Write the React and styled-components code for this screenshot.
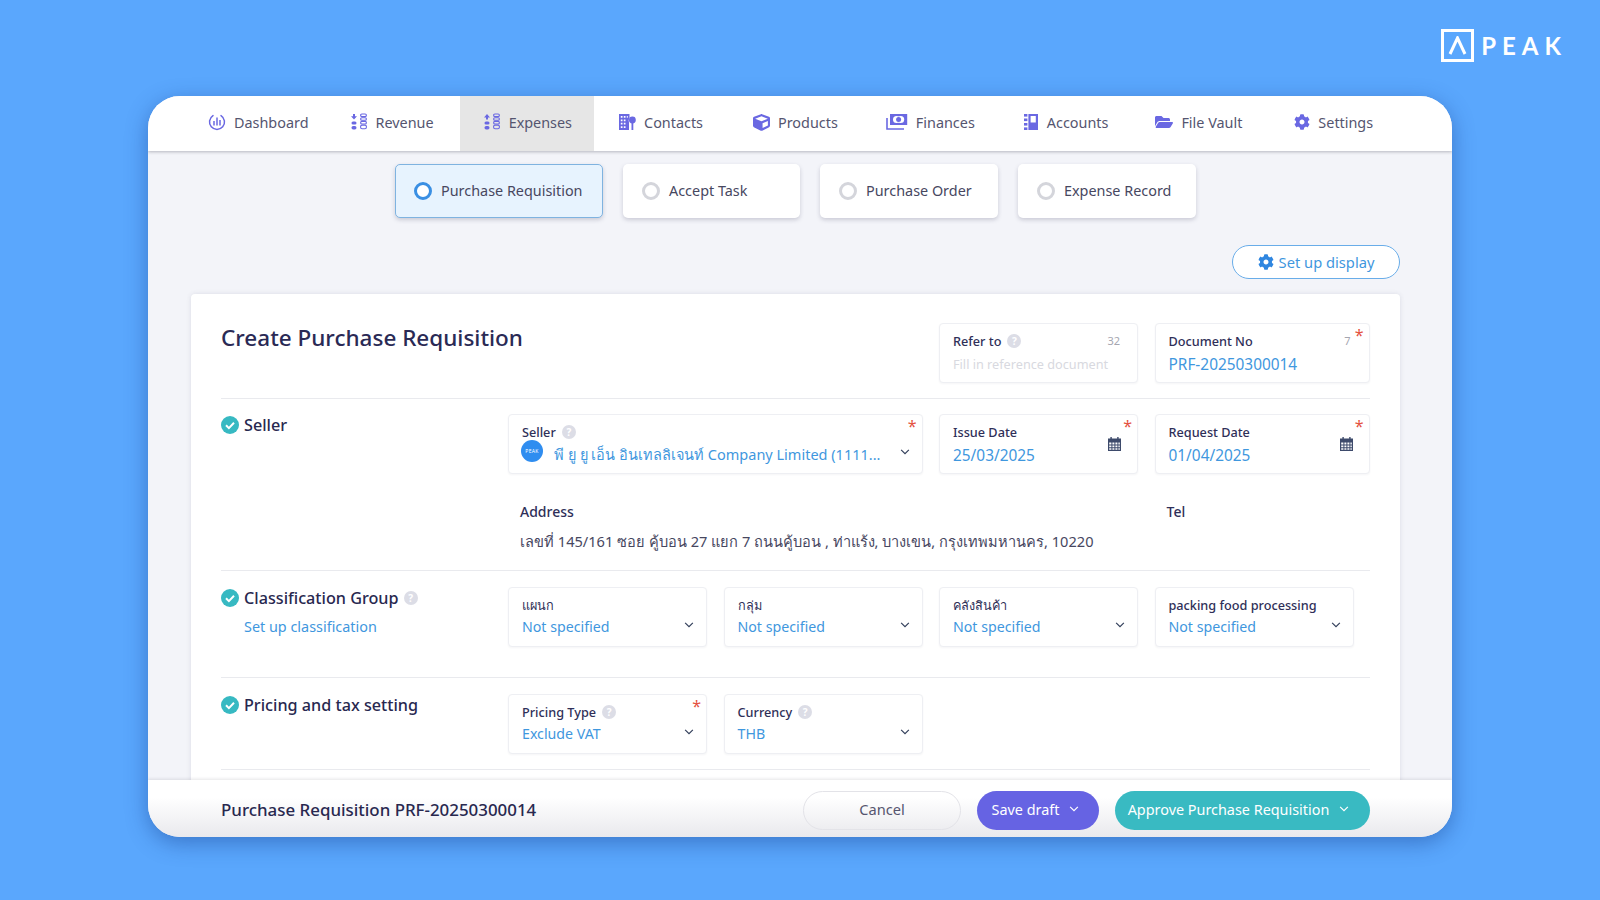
import React from 'react';
import styled, { createGlobalStyle } from 'styled-components';
import { FaCube, FaFolderOpen, FaCog } from 'react-icons/fa';

const GlobalStyle = createGlobalStyle`
  html, body {
    margin: 0;
    padding: 0;
    background: #5aa7fd;
  }
  body {
    font-family: 'Noto Sans', 'Open Sans', 'DejaVu Sans', sans-serif;
    color: #2b2b55;
  }
  * { box-sizing: border-box; }
`;

const ICON_COLOR = '#6a68e2';
const BLUE = '#3f97de';

const DashboardIcon = () => (
  <svg width="18" height="18" viewBox="0 0 18 18" fill="none" stroke={ICON_COLOR}>
    <path d="M5 2.6a7.5 7.5 0 1 0 8 0" strokeWidth="1.5" strokeLinecap="round" />
    <path d="M6 8v4.5M9 4.5v8M12 7v5.5" strokeWidth="1.5" />
  </svg>
);

const Coins = ({ up }) => (
  <svg width="18" height="18" viewBox="0 0 18 18" fill={ICON_COLOR}>
    {up ? <path d="M4 1l3 3.4H5v2.2H3V4.4H1z" /> : <path d="M3 1h2v2.2h2L4 6.6 1 3.2h2z" />}
    <rect x="1.5" y="8.5" width="5" height="3" rx="1.5" />
    <rect x="1.5" y="13" width="5" height="3.4" rx="1.7" />
    <g fill="none" stroke={ICON_COLOR} strokeWidth="1.1">
      <rect x="10.6" y="1" width="5.8" height="2.6" rx="1.3" />
      <rect x="10.6" y="4.7" width="5.8" height="2.6" rx="1.3" />
      <rect x="10.6" y="8.4" width="5.8" height="2.6" rx="1.3" />
      <rect x="10.6" y="12.1" width="5.8" height="3.6" rx="1.5" />
    </g>
  </svg>
);

const ContactsIcon = () => (
  <svg width="18" height="18" viewBox="0 0 18 18" fill={ICON_COLOR}>
    <path d="M1 1h10.5v4.2A4 4 0 0 0 11 9.8V17H1zm1.8 2v1.8h1.7V3zm3 0v1.8h1.7V3zm3 0v1.8h1V3zm-6 3.4v1.8h1.7V6.4zm3 0v1.8h1.7V6.4zm-3 3.4v1.8h1.7V9.8zm3 0v1.8h1.7V9.8zm-3 3.4V15h1.7v-1.8zm3 0V15h1.7v-1.8z" fillRule="evenodd" />
    <circle cx="14.4" cy="7" r="3.4" />
    <rect x="13.5" y="10" width="1.8" height="7" />
  </svg>
);

const FinancesIcon = () => (
  <svg width="22" height="18" viewBox="0 0 22 18" fill="none" stroke={ICON_COLOR}>
    <path d="M1 5v11h17" strokeWidth="1.6" />
    <path d="M4 1h17.2v11H4z" fill={ICON_COLOR} stroke="none" />
    <circle cx="10.6" cy="6.5" r="3.6" fill="#fff" stroke="none" />
    <circle cx="14.6" cy="6.5" r="3.6" fill="#fff" stroke="none" />
    <circle cx="12.6" cy="6.5" r="2.5" fill={ICON_COLOR} stroke="none" />
  </svg>
);

const AccountsIcon = () => (
  <svg width="16" height="18" viewBox="0 0 16 18" fill={ICON_COLOR}>
    <rect x="1" y="1" width="3.4" height="2.6" />
    <rect x="1" y="5.5" width="3.4" height="2.6" />
    <rect x="1" y="10" width="3.4" height="2.6" />
    <rect x="1" y="14.4" width="3.4" height="2.6" />
    <path d="M5.4 1H15v16H5.4zM7.6 3v6.5h5.2V3z" fillRule="evenodd" />
  </svg>
);

const CalendarIcon = () => (
  <svg width="13" height="14" viewBox="0 0 13 14" fill="#3d4a6b">
    <rect x="2.4" y="0" width="1.4" height="2.4" />
    <rect x="9.2" y="0" width="1.4" height="2.4" />
    <path fillRule="evenodd" d="M0 1.4h13V14H0zM1.2 5.4v2h2.2v-2zm3.2 0v2h2v-2zm3 0v2h2v-2zm3 0v2h1.4v-2zM1.2 8.4v1.8h2.2V8.4zm3.2 0v1.8h2V8.4zm3 0v1.8h2V8.4zm3 0v1.8h1.4V8.4zM1.2 11.2v1.6h2.2v-1.6zm3.2 0v1.6h2v-1.6zm3 0v1.6h2v-1.6zm3 0v1.6h1.4v-1.6z" />
  </svg>
);

const CheckIcon = () => (
  <svg width="18" height="18" viewBox="0 0 18 18">
    <circle cx="9" cy="9" r="9" fill="#37b9c2" />
    <path d="M5 9.2l2.9 2.9L13 6.8" fill="none" stroke="#fff" strokeWidth="2" />
  </svg>
);

const Chevron = ({ className }) => (
  <svg className={className} width="10" height="6" viewBox="0 0 11 7" fill="none" stroke="currentColor" strokeWidth="1.4">
    <path d="M1 1l4.5 4.5L10 1" />
  </svg>
);

const navItems = [
  { label: 'Dashboard', icon: <DashboardIcon />, left: 23 },
  { label: 'Revenue', icon: <Coins />, left: 17, right: 26 },
  { label: 'Expenses', icon: <Coins up />, left: 23, right: 22, active: true },
  { label: 'Contacts', icon: <ContactsIcon />, left: 24 },
  { label: 'Products', icon: <FaCube size={17} color={ICON_COLOR} />, left: 26 },
  { label: 'Finances', icon: <FinancesIcon />, left: 24 },
  { label: 'Accounts', icon: <AccountsIcon />, left: 24 },
  { label: 'File Vault', icon: <FaFolderOpen size={18} color={ICON_COLOR} />, left: 23 },
  { label: 'Settings', icon: <FaCog size={16} color={ICON_COLOR} />, left: 28 },
];

const steps = [
  { label: 'Purchase Requisition', width: 208, active: true },
  { label: 'Accept Task', width: 177 },
  { label: 'Purchase Order', width: 178 },
  { label: 'Expense Record', width: 178 },
];

const Help = ({ size }) => <HelpDot $size={size}>?</HelpDot>;

const Field = ({ label, help, value, numeric, placeholder, required, counter, calendar, select, narrow, span, children }) => (
  <FieldBox $narrow={narrow} $span={span}>
    <FieldLabel>
      {label}
      {help && <Help />}
    </FieldLabel>
    {children || (value ? <FieldValue $numeric={numeric}>{value}</FieldValue> : <FieldHint>{placeholder}</FieldHint>)}
    {required && <Asterisk>*</Asterisk>}
    {counter && <Counter $shift={required}>{counter}</Counter>}
    {calendar && <FieldAddon><CalendarIcon /></FieldAddon>}
    {select && <SelectArrow />}
  </FieldBox>
);

const App = () => (
  <Page>
    <GlobalStyle />
    <LogoBar>
      <LogoMark>
        <svg width="19" height="19" viewBox="0 0 19 19" fill="none" stroke="#fff" strokeWidth="3">
          <path d="M2 18L9.5 2 17 18" />
        </svg>
      </LogoMark>
      <LogoText>PEAK</LogoText>
    </LogoBar>
    <Window>
      <Nav>
        {navItems.map((item) => (
          <NavItem key={item.label} $active={item.active} $left={item.left} $right={item.right}>
            {item.icon}
            {item.label}
          </NavItem>
        ))}
      </Nav>
      <Main>
        <Steps>
          {steps.map((step) => (
            <Step key={step.label} $active={step.active} $width={step.width}>
              <Radio $active={step.active} />
              {step.label}
            </Step>
          ))}
        </Steps>
        <DisplayRow>
          <DisplayButton>
            <FaCog size={16} />
            Set up display
          </DisplayButton>
        </DisplayRow>
        <Card>
          <Section $top={0} $bottom={15}>
            <Title>Create Purchase Requisition</Title>
            <Fields>
              <Field span={3} label="Refer to" help placeholder="Fill in reference document" counter="32" />
              <Field label="Document No" value="PRF-20250300014" numeric required counter="7" />
            </Fields>
          </Section>
          <Section $top={15} $bottom={19}>
            <Heading>
              <CheckIcon />
              Seller
            </Heading>
            <Fields>
              <Field span="1 / span 2" label="Seller" help required select>
                <SellerValue>
                  <Avatar>PEAK</Avatar>
                  <SellerName>พี ยู ยู เอ็น อินเทลลิเจนท์ Company Limited (1111...</SellerName>
                </SellerValue>
              </Field>
              <Field label="Issue Date" value="25/03/2025" numeric required calendar />
              <Field label="Request Date" value="01/04/2025" numeric required calendar />
              <AddressBlock>
                <InfoLabel>Address</InfoLabel>
                <AddressText>เลขที่ 145/161 ซอย คู้บอน 27 แยก 7 ถนนคู้บอน , ท่าแร้ง, บางเขน, กรุงเทพมหานคร, 10220</AddressText>
              </AddressBlock>
              <TelBlock>
                <InfoLabel>Tel</InfoLabel>
              </TelBlock>
            </Fields>
          </Section>
          <Section $top={16} $bottom={30}>
            <div>
              <Heading>
                <CheckIcon />
                Classification Group
                <Help size={14} />
              </Heading>
              <SetupLink>Set up classification</SetupLink>
            </div>
            <Fields>
              <Field label="แผนก" value="Not specified" select />
              <Field label="กลุ่ม" value="Not specified" select />
              <Field label="คลังสินค้า" value="Not specified" select />
              <Field label="packing food processing" value="Not specified" select narrow />
            </Fields>
          </Section>
          <Section $top={16} $bottom={15}>
            <Heading>
              <CheckIcon />
              Pricing and tax setting
            </Heading>
            <Fields>
              <Field label="Pricing Type" help value="Exclude VAT" required select />
              <Field label="Currency" help value="THB" select />
            </Fields>
          </Section>
        </Card>
      </Main>
      <Footer>
        <FooterTitle>Purchase Requisition PRF-20250300014</FooterTitle>
        <CancelButton>Cancel</CancelButton>
        <ActionButton $color="#6663e3" $width={122} $right={5}>
          Save draft
          <Chevron />
        </ActionButton>
        <ActionButton $color="#39bac2" $width={255} $right={8}>
          Approve Purchase Requisition
          <Chevron />
        </ActionButton>
      </Footer>
    </Window>
  </Page>
);

export default App;

const Page = styled.div`
  width: 1600px;
  height: 900px;
  overflow: hidden;
  padding-left: 148px;
  background: #5aa7fd;
`;

const LogoBar = styled.div`
  height: 96px;
  width: 1413px;
  padding-top: 29px;
  display: flex;
  justify-content: flex-end;
  align-items: flex-start;
  gap: 7px;
`;

const LogoMark = styled.div`
  width: 33px;
  height: 33px;
  border: 3px solid #fff;
  display: flex;
  align-items: center;
  justify-content: center;
`;

const LogoText = styled.div`
  font-family: 'Lato', sans-serif;
  font-size: 24px;
  line-height: 33px;
  font-weight: 700;
  letter-spacing: 6px;
  color: #fff;
  margin-right: -6px;
`;

const Window = styled.div`
  width: 1304px;
  height: 741px;
  border-radius: 32px;
  overflow: hidden;
  display: flex;
  flex-direction: column;
  background: #f3f4f9;
  box-shadow: 0 6px 22px rgba(20, 60, 140, 0.45);
`;

const Nav = styled.nav`
  flex: none;
  height: 55px;
  display: flex;
  padding-left: 37px;
  background: #fff;
  box-shadow: 0 1px 3px rgba(40, 40, 60, 0.3);
  position: relative;
`;

const NavItem = styled.div`
  display: flex;
  align-items: center;
  gap: 8px;
  padding: 0 ${(p) => p.$right || 24}px 3px ${(p) => p.$left}px;
  font-size: 14.4px;
  color: #55556f;
  background: ${(p) => (p.$active ? '#e6e6e6' : 'transparent')};
`;

const Main = styled.main`
  flex: 1;
  min-height: 0;
  overflow: hidden;
  padding: 13px 52px 0 43px;
`;

const Steps = styled.div`
  display: flex;
  justify-content: center;
  gap: 20px;
`;

const Step = styled.div`
  width: ${(p) => p.$width}px;
  height: 54px;
  display: flex;
  align-items: center;
  gap: 9px;
  padding: 0 0 2px 18px;
  font-size: 14.4px;
  color: #47475f;
  border-radius: 5px;
  background: ${(p) => (p.$active ? '#e7f3fe' : '#fff')};
  border: 1px solid ${(p) => (p.$active ? '#7fb3e0' : 'transparent')};
  box-shadow: 0 2px 4px rgba(60, 60, 90, 0.22);
`;

const Radio = styled.span`
  width: 18px;
  height: 18px;
  margin-top: 2px;
  border-radius: 50%;
  border: ${(p) => (p.$active ? '3px solid #3a8fe3' : '3px solid #d4d5db')};
  background: #fff;
`;

const DisplayRow = styled.div`
  display: flex;
  justify-content: flex-end;
  margin: 27px 0 15px;
`;

const DisplayButton = styled.div`
  width: 168px;
  height: 34px;
  display: flex;
  align-items: center;
  justify-content: center;
  gap: 5px;
  font-size: 14.7px;
  color: ${BLUE};
  background: #fff;
  border: 1px solid #69ade9;
  border-radius: 17px;
  svg { color: #2f86e0; }
`;

const Card = styled.div`
  background: #fff;
  padding: 29px 30px 60px;
  height: 600px;
  border-radius: 4px 4px 0 0;
  box-shadow: 0 0 5px rgba(60, 60, 90, 0.12);
`;

const Section = styled.section`
  position: relative;
  display: grid;
  grid-template-columns: 287px 1fr;
  padding: ${(p) => p.$top}px 0 ${(p) => p.$bottom}px;
  border-bottom: 1px solid #e9eaee;
`;

const Title = styled.h1`
  margin: -1px 0 0;
  white-space: nowrap;
  font-size: 22.5px;
  line-height: 32px;
  font-weight: 500;
  color: #2a2a55;
`;

const Heading = styled.div`
  display: flex;
  align-items: center;
  align-self: start;
  gap: 5px;
  margin-top: -0.5px;
  white-space: nowrap;
  font-size: 16.2px;
  line-height: 22px;
  font-weight: 500;
  color: #28284f;
`;

const SetupLink = styled.div`
  margin: 8px 0 0 23px;
  font-size: 14.4px;
  line-height: 20px;
  color: ${BLUE};
`;

const Fields = styled.div`
  display: grid;
  grid-template-columns: 199px 199px 199px 215px;
  column-gap: 16.5px;
  align-items: start;
`;

const FieldBox = styled.div`
  position: relative;
  height: 60px;
  padding: 8px 13px 0;
  border: 1px solid #eeeff3;
  border-radius: 4px;
  background: #fff;
  box-shadow: 0 1px 2px rgba(60, 60, 90, 0.05);
  ${(p) => p.$narrow && 'width: 199px;'}
  ${(p) => p.$span && `grid-column: ${p.$span};`}
`;

const FieldLabel = styled.div`
  display: flex;
  align-items: center;
  gap: 6px;
  height: 18px;
  white-space: nowrap;
  font-size: 12.7px;
  font-weight: 500;
  color: #2f2f58;
`;

const FieldValue = styled.div`
  margin-top: ${(p) => (p.$numeric ? 5 : 3)}px;
  font-size: ${(p) => (p.$numeric ? 15.4 : 14.2)}px;
  line-height: 20px;
  white-space: nowrap;
  color: ${BLUE};
`;

const FieldHint = styled(FieldValue)`
  margin-top: 4px;
  font-size: 12.7px;
  color: #d8d9e0;
`;

const HelpDot = styled.span`
  width: ${(p) => p.$size || 14}px;
  height: ${(p) => p.$size || 14}px;
  flex: none;
  display: inline-flex;
  align-items: center;
  justify-content: center;
  border-radius: 50%;
  background: #dcdde6;
  color: #fff;
  font-size: 10px;
  font-weight: 700;
`;

const Asterisk = styled.span`
  position: absolute;
  top: 3px;
  right: 5px;
  font-size: 16px;
  line-height: 16px;
  color: #e4523f;
`;

const Counter = styled.span`
  position: absolute;
  top: 9px;
  right: ${(p) => (p.$shift ? 18 : 17)}px;
  font-size: 11px;
  line-height: 16px;
  color: #a5a6b0;
`;

const FieldAddon = styled.span`
  position: absolute;
  top: 22px;
  right: 16px;
  display: flex;
`;

const SelectArrow = styled(Chevron)`
  position: absolute;
  top: 34px;
  right: 12px;
  color: #34405c;
`;

const SellerValue = styled.div`
  display: flex;
  align-items: flex-end;
  gap: 11px;
  margin: -1px 0 0 -1px;
`;

const Avatar = styled.span`
  width: 22px;
  height: 22px;
  flex: none;
  display: flex;
  align-items: center;
  justify-content: center;
  border-radius: 50%;
  background: #2f8df0;
  color: #fff;
  font-size: 5px;
  letter-spacing: 0.3px;
`;

const SellerName = styled.span`
  margin-bottom: -2px;
  font-size: 14.5px;
  line-height: 20px;
  white-space: nowrap;
  color: ${BLUE};
`;

const AddressBlock = styled.div`
  grid-column: 1 / span 3;
  padding: 28px 0 0 12px;
`;

const TelBlock = styled.div`
  padding: 28px 0 0 12px;
`;

const InfoLabel = styled.div`
  font-size: 14px;
  line-height: 20px;
  font-weight: 500;
  color: #2f2f58;
`;

const AddressText = styled.div`
  margin-top: 9px;
  font-size: 14.6px;
  line-height: 20px;
  white-space: nowrap;
  color: #47475f;
`;

const Footer = styled.footer`
  flex: none;
  height: 57px;
  display: flex;
  align-items: center;
  gap: 16px;
  padding: 3px 82px 0 73px;
  background: linear-gradient(180deg, #fff 30%, #e9e9ed 100%);
  box-shadow: 0 -1px 3px rgba(40, 40, 60, 0.12);
  position: relative;
`;

const FooterTitle = styled.div`
  flex: 1;
  margin-bottom: 2px;
  font-size: 16.9px;
  font-weight: 500;
  color: #28284f;
`;

const CancelButton = styled.div`
  width: 158px;
  height: 39px;
  padding-bottom: 3px;
  display: flex;
  align-items: center;
  justify-content: center;
  border-radius: 20px;
  border: 1px solid #e3e3e8;
  font-size: 14.6px;
  color: #55556f;
`;

const ActionButton = styled.div`
  width: ${(p) => p.$width}px;
  height: 39px;
  padding: 0 ${(p) => p.$right}px 2px 0;
  display: flex;
  align-items: center;
  justify-content: center;
  gap: 10px;
  border-radius: 20px;
  background: ${(p) => p.$color};
  font-size: 14.4px;
  color: #fff;
`;
